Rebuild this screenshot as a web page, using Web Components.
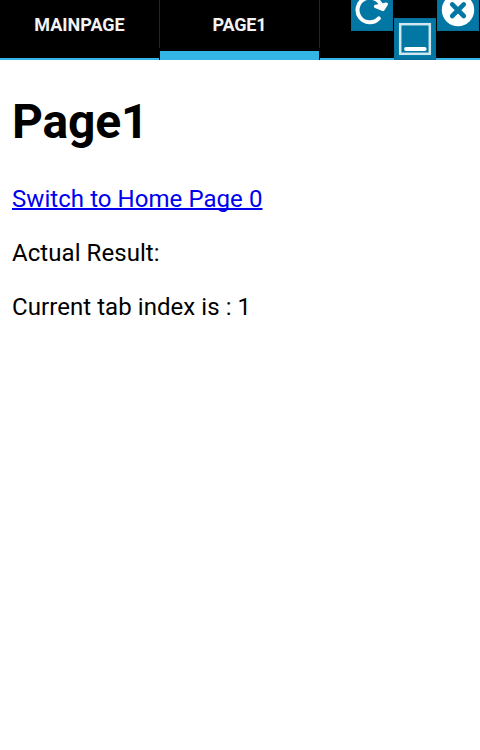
<!DOCTYPE html>
<html lang="en">
<head>
<meta charset="utf-8">
<title>Page1</title>
<style>
body { margin: 0; background: #fff; font-family: Roboto, "Liberation Sans", sans-serif; }
</style>
</head>
<body>
<tab-app></tab-app>
<script>
function define(name, html) {
  const template = document.createElement('template');
  template.innerHTML = html;
  customElements.define(name, class extends HTMLElement {
    constructor() {
      super();
      this.attachShadow({ mode: 'open' }).append(template.content.cloneNode(true));
    }
  });
}

define('tab-item', `
<style>
:host { display: grid; grid-template-columns: 159px 1px; grid-template-rows: 48px 3px 9px; width: 160px; height: 60px; }
.label { display: flex; align-items: center; justify-content: center; height: 50px; color: #f3f3f3; font-size: 18px; font-weight: 700; line-height: 22px; letter-spacing: 0; text-transform: uppercase; }
.divider { background: #262626; }
.bar { grid-row: 3; align-self: end; height: 2px; background: #33b5e5; }
:host([selected]) .bar { height: 9px; }
:host([selected]) .label { letter-spacing: -0.2px; }
</style>
<div class="label"><span><slot></slot></span></div><div class="divider"></div><div class="bar"></div>`);

define('tool-button', `
<style>
:host { display: block; width: 42px; height: 42px; background: #0277a4; box-shadow: inset 0 0 0 1px #086f9b; }
::slotted(svg) { display: block; width: 42px; height: 42px; }
</style>
<slot></slot>`);

/* The side buttons hang partly above the top edge of the window. */
define('tool-strip', `
<style>
:host { display: flex; gap: 1px; height: 60px; overflow: hidden; }
.side { margin-top: -11px; }
.mid { margin-top: 18px; }
</style>
<tool-button class="side"><svg viewBox="0 -11 42 42" fill="none">
  <path d="M27.8 18.4A12.3 12.3 0 1 1 30.6 6.5" stroke="#fff" stroke-width="4" stroke-linecap="round"/>
  <path d="M24.6 6.4L32 9.4L35.3 4.2L30.5 5.5Z" fill="#fff" stroke="#fff" stroke-width="3.4" stroke-linecap="round" stroke-linejoin="round"/>
</svg></tool-button>
<tool-button class="mid"><svg viewBox="0 0 42 42" fill="none">
  <rect x="6.2" y="6.2" width="29.6" height="29.6" stroke="#cfe7ef" stroke-width="2.5"/>
  <path d="M12 31H30.7" stroke="#fff" stroke-width="3.8" stroke-linecap="round"/>
</svg></tool-button>
<tool-button class="side"><svg viewBox="0 -11 42 42" fill="none">
  <circle cx="21" cy="10" r="16.2" fill="#fff"/>
  <path d="M15.2 4.4L26.8 16M26.8 4.4L15.2 16" stroke="#0277a4" stroke-width="4.6" stroke-linecap="round"/>
</svg></tool-button>`);

define('tab-bar', `
<style>
:host { display: flex; height: 60px; background: #000; }
.rest { flex: 1; display: flex; justify-content: flex-end; padding-right: 1px; background: linear-gradient(#33b5e5, #33b5e5) bottom / 100% 2px no-repeat; }
</style>
<slot></slot>
<div class="rest"><tool-strip></tool-strip></div>`);

define('page-content', `
<style>
:host { display: block; padding: 32px 12px; color: #000; font-size: 24px; line-height: 30px; letter-spacing: 0.06px; }
h1 { margin: 0 0 32px; font-size: 48px; line-height: 60px; letter-spacing: -0.2px; }
p { margin: 0 0 24px; }
a { color: #0000ee; text-decoration-thickness: 2px; text-decoration-skip-ink: none; }
</style>
<h1>Page1</h1>
<p><a href="#">Switch to Home Page 0</a></p>
<p>Actual Result:</p>
<p>Current tab index is : 1</p>`);

define('tab-app', `
<style>:host { display: block; }</style>
<tab-bar><tab-item>Mainpage</tab-item><tab-item selected>Page1</tab-item></tab-bar>
<page-content></page-content>`);
</script>
</body>
</html>
